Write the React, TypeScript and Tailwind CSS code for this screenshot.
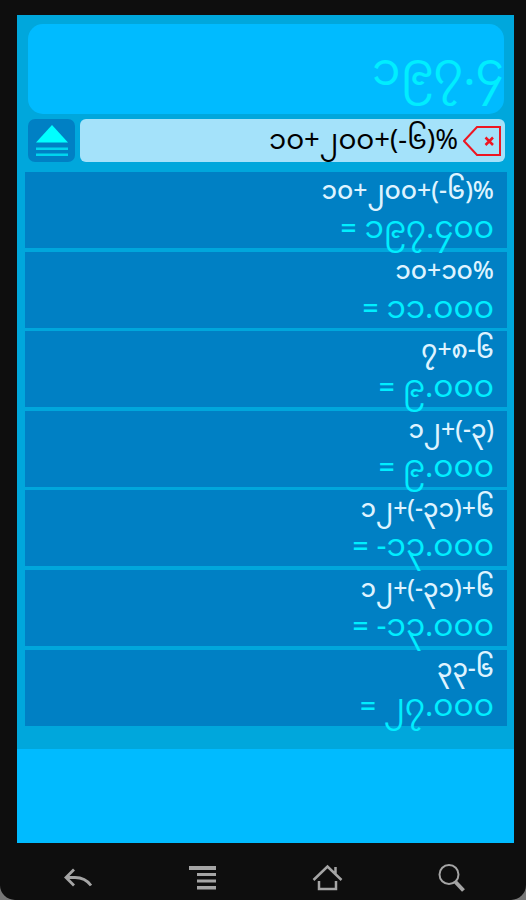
import React from 'react';

type Entry = {
  expression: string;
  result: string;
};

const entries: Entry[] = [
  { expression: '၁၀+၂၀၀+(-၆)%', result: '၁၉၇.၄၀၀' },
  { expression: '၁၀+၁၀%', result: '၁၁.၀၀၀' },
  { expression: '၇+၈-၆', result: '၉.၀၀၀' },
  { expression: '၁၂+(-၃)', result: '၉.၀၀၀' },
  { expression: '၁၂+(-၃၁)+၆', result: '-၁၃.၀၀၀' },
  { expression: '၁၂+(-၃၁)+၆', result: '-၁၃.၀၀၀' },
  { expression: '၃၃-၆', result: '၂၇.၀၀၀' },
];

const HistoryRow = ({ expression, result }: Entry) => (
  <li className="h-[79.6px] pb-[3.5px]">
    <div className="h-full bg-[#0080c4] pt-[3px] pr-[13px] text-right whitespace-nowrap">
      <div className="h-[36px] text-[24.8px] leading-[37px] font-medium text-[#def3ff]">{expression}</div>
      <div className="h-[37px] text-[31px] leading-[41px] text-[#00eeff]">
        <span className="mr-[8px] text-[28px] font-medium">=</span>
        {result}
      </div>
    </div>
  </li>
);

const NavBar = () => (
  <nav className="flex h-[57px] items-center pt-[12px] text-[#a5a5a5]">
    {/* Back */}
    <svg className="ml-[64px]" width="29" height="22" viewBox="0 0 29 22" fill="none" stroke="currentColor" strokeWidth="2.8">
      <path d="M10 2.500L2 10.500l8 8M2 10.500h9c7 0 12 2.500 16 8" />
    </svg>
    {/* Menu */}
    <svg className="ml-[96px]" width="28" height="26" viewBox="0 0 28 26" fill="currentColor">
      <path d="M0 1h27v4H0zM8 8h19v3H8zM8 14.500h19v3H8zM8 21h19v3.500H8z" />
    </svg>
    {/* Home */}
    <svg className="ml-[95px]" width="31" height="27" viewBox="0 0 31 27" fill="none" stroke="currentColor" strokeWidth="2.500">
      <path d="M1.500 16L15.500 2.500l14 13.500M23.500 10V3M7 17v8h17v-8" />
    </svg>
    {/* Search */}
    <svg className="ml-[95px]" width="28" height="30" viewBox="0 0 28 30" fill="none" stroke="currentColor">
      <circle cx="11" cy="11.500" r="9.500" strokeWidth="2" />
      <path d="M17.500 19l8 8.500" strokeWidth="4" />
    </svg>
  </nav>
);

const App = () => {
  return (
    <div className="h-[900px] w-[526px] overflow-hidden bg-[#777777]">
      <div className="flex h-[900px] flex-col overflow-hidden rounded-b-[15px] bg-[#0e0e0e] pt-[15px] font-['Noto_Sans_Myanmar','Noto_Sans',sans-serif]">
        <main className="ml-[17px] h-[828px] w-[497px] shrink-0 bg-[#00bbff]">
          <section className="h-[734px] bg-[#00a7dc] pt-[9px]">
            {/* Current value */}
            <div className="ml-[11px] h-[90px] w-[476px] rounded-[15px] bg-[#00bbff] text-right text-[46px] leading-[102px] whitespace-nowrap text-[#00eeff]">
              ၁၉၇.၄
            </div>

            <div className="mt-[5px] ml-[11px] flex h-[43px] gap-[5px]">
              <button className="flex w-[47px] items-center justify-center rounded-[7px] bg-[#0080c4]">
                <svg width="32" height="32" viewBox="0 0 32 32">
                  <path d="M16 0l16 17.500H0z" fill="#00ffff" />
                  <path d="M0 22.500h32v2.500H0zM0 28.500h32v2.500H0z" fill="#00d5ee" />
                </svg>
              </button>
              <div className="flex w-[425px] items-center justify-end rounded-[6px] bg-[#a4e2fa] pr-[4px] text-[27.5px] leading-[43px] whitespace-nowrap text-black">
                <span className="pt-[6px]">၁၀+၂၀၀+(-၆)%</span>
                <svg className="ml-[5px]" width="38" height="30" viewBox="0 0 38 30" fill="none" stroke="#ee1622" strokeWidth="2">
                  <path d="M1 15L14 1h23v28H14z" />
                  <path d="M22.500 11.500l7.500 7.500M30 11.500l-7.500 7.500" strokeWidth="2.500" />
                </svg>
              </div>
            </div>

            <ul className="mt-[10px] ml-[8px] w-[482px]">
              {entries.map((entry, index) => (
                <HistoryRow key={index} {...entry} />
              ))}
            </ul>
          </section>
        </main>

        <NavBar />
      </div>
    </div>
  );
};

export default App;
